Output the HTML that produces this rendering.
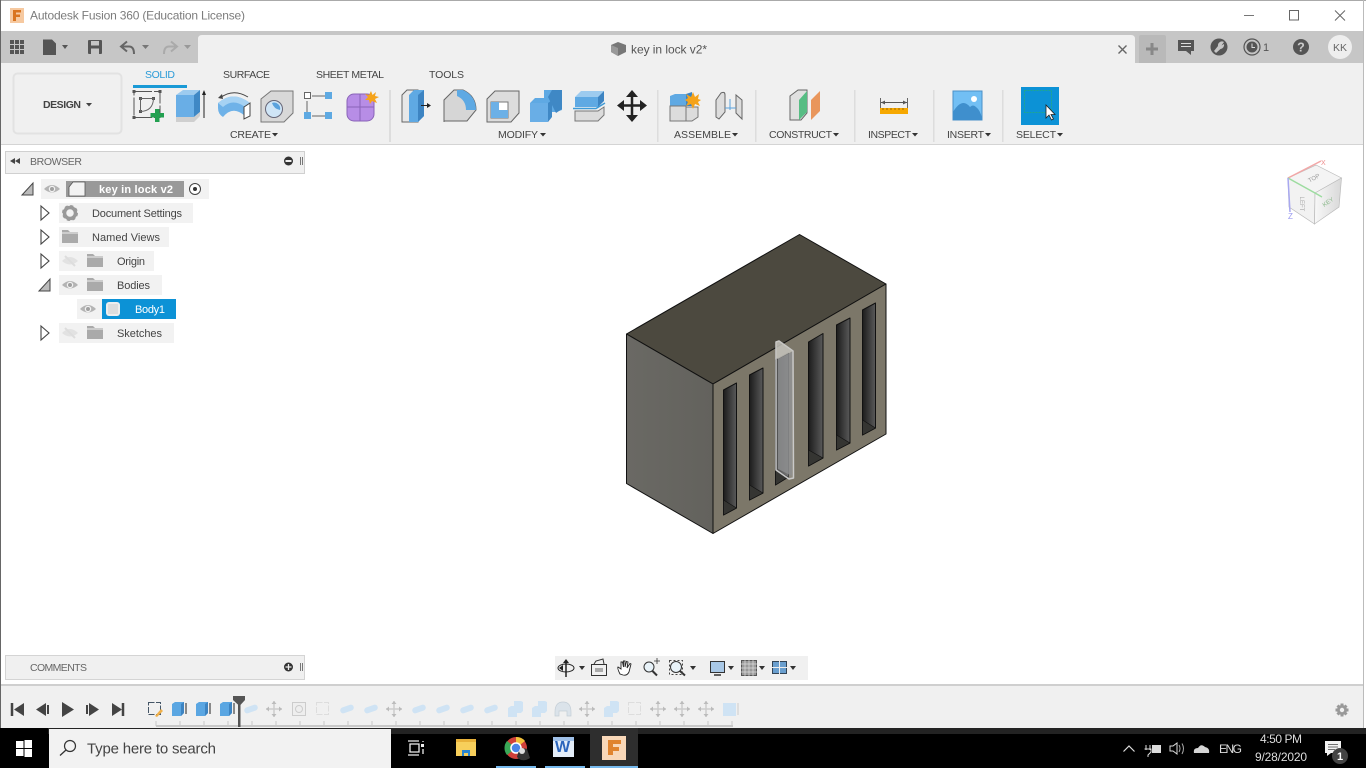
<!DOCTYPE html>
<html><head><meta charset="utf-8"><title>Autodesk Fusion 360</title>
<style>
html,body{margin:0;padding:0;width:1366px;height:768px;overflow:hidden;background:#fff}
svg{display:block;position:absolute;left:0;top:0}
text{font-family:"Liberation Sans",sans-serif;fill:#555;font-size:11px}
.l{font-size:10.5px;fill:#444}
.t{font-size:10.5px;fill:#666}
.tab{font-size:10.5px;fill:#444}
.n{font-size:11px;fill:#444}
</style></head><body>
<svg width="1366" height="768" viewBox="0 0 1366 768">
<defs>
<symbol id="eye" overflow="visible"><path d="M-8 0Q0-8 8 0Q0 7-8 0Z" fill="#b4b4b4"/><circle r="3.200" fill="#f2f2f2"/><circle r="2" fill="#a0a0a0"/></symbol>
<symbol id="eyeoff" overflow="visible"><path d="M-8 0Q0-8 8 0Q0 7-8 0Z" fill="#e2e2e2"/><path d="M-5-5L5 5" stroke="#ddd" stroke-width="2"/></symbol>
<symbol id="folder" overflow="visible"><path d="M-8-7H-2L0-5H8V6H-8Z" fill="#aaa"/><path d="M-8-5H8V-3H-8Z" fill="#ccc"/></symbol>
<symbol id="open" overflow="visible"><path d="M-4-7L4 0L-4 7Z" fill="#fff" stroke="#444" stroke-width="1.100"/></symbol>
<symbol id="down" overflow="visible"><path d="M5-6V6H-6Z" fill="#bbb" stroke="#444" stroke-width="1"/></symbol>
<symbol id="pill" overflow="visible"><rect x="-7" y="-3" width="14" height="6" rx="3" fill="#cfe3f4" transform="rotate(-20)"/></symbol>
<symbol id="mv" overflow="visible"><path d="M0-8V8M-8 0H8" stroke="#ccc" stroke-width="1.500"/><path d="M0-8L-2.500-5H2.500ZM0 8L-2.500 5H2.500ZM-8 0L-5-2.500V2.500ZM8 0L5-2.500V2.500Z" fill="#bbb"/></symbol>
<symbol id="cmb" overflow="visible"><path d="M-7 8V-1L-4-3H-1V-8H6L8-7V2L6 4H2V8Z" fill="#cfe3f4"/></symbol>
<linearGradient id="sl" x1="0" x2="1" y1="0" y2="0"><stop offset="0" stop-color="#1c1c1c"/><stop offset="1" stop-color="#5a5a5a"/></linearGradient>
<linearGradient id="ll" x1="0" x2="1" y1="0" y2="0"><stop offset="0" stop-color="#6a6964"/><stop offset="1" stop-color="#63625d"/></linearGradient>
<linearGradient id="cb" x1="0" x2="1"><stop offset="0" stop-color="#f8f8f8"/><stop offset="1" stop-color="#d8d8d8"/></linearGradient>
</defs>

<!-- Title bar -->
<rect width="1366" height="31" fill="#fff"/>
<rect width="1366" height="1" fill="#aaa"/>
<rect x="0" width="1" height="728" fill="#666"/>
<rect x="10" y="8" width="14" height="15" fill="#f6c9a0"/>
<path d="M13 10H21V12.500H16V14.500H20V17H16V21H13Z" fill="#d9741f"/>
<text x="30" y="19.500" style="font-size:12px;fill:#7c7c7c" textLength="215">Autodesk Fusion 360 (Education License)</text>
<path d="M1244 15.500H1254" stroke="#777"/>
<rect x="1289.500" y="10.500" width="9" height="9.500" fill="none" stroke="#666"/>
<path d="M1335 10.500L1345 20.500M1345 10.500L1335 20.500" stroke="#666"/>

<!-- QAT / tab band -->
<rect x="1" y="31" width="1362" height="32" fill="#c6c6c6"/>
<path d="M198 63V39Q198 35 202 35H1131Q1135 35 1135 39V63Z" fill="#f0f0f0"/>
<g fill="#555">
<rect x="10" y="40" width="4" height="4"/><rect x="15" y="40" width="4" height="4"/><rect x="20" y="40" width="4" height="4"/>
<rect x="10" y="45" width="4" height="4"/><rect x="15" y="45" width="4" height="4"/><rect x="20" y="45" width="4" height="4"/>
<rect x="10" y="50" width="4" height="4"/><rect x="15" y="50" width="4" height="4"/><rect x="20" y="50" width="4" height="4"/>
<path d="M43 39.500H52L56 43.500V55H43Z"/>
<path d="M62 45H68L65 49Z"/>
<path d="M88 41Q88 40 89 40H101Q102 40 102 41V53Q102 54 101 54H89Q88 54 88 53ZM91 41V45.500H99V41ZM91 48.500V54H99V48.500Z" fill-rule="evenodd"/>
<path d="M142 45H149L145.500 49Z" fill="#777"/>
</g>
<path d="M122 46.500H129Q134 46.500 134 54" fill="none" stroke="#666" stroke-width="2"/>
<path d="M127 41.500L121 46.500L127 51.500" fill="none" stroke="#666" stroke-width="2"/>
<path d="M176 46.500H169Q164 46.500 164 54" fill="none" stroke="#aaa" stroke-width="2"/>
<path d="M171 41.500L177 46.500L171 51.500" fill="none" stroke="#aaa" stroke-width="2"/>
<path d="M184 45H191L187.500 49Z" fill="#999"/>
<!-- doc tab title -->
<path d="M611 45L618 42L626 45V52L618 56L611 52Z" fill="#777"/><path d="M611 45L618 48V56L611 52Z" fill="#999"/>
<text x="631" y="53.500" style="font-size:12px;fill:#555" textLength="76">key in lock v2*</text>
<path d="M1118.500 45.500L1126.500 53.500M1126.500 45.500L1118.500 53.500" stroke="#666" stroke-width="1.400"/>
<!-- right controls -->
<path d="M1139 63V37Q1139 35 1141 35H1164Q1166 35 1166 37V63Z" fill="#b9b9b9"/>
<path d="M1152 43V55M1146 49H1158" stroke="#888" stroke-width="3"/>
<path d="M1178 40H1194V51H1191V55L1186 51H1178Z" fill="#555"/><path d="M1181 43.500H1191M1181 46.500H1191" stroke="#ddd"/>
<circle cx="1219" cy="47" r="8.500" fill="#555"/><path d="M1224 42A4 4 0 0 0 1218 46L1214 51L1216 53L1220.500 49A4 4 0 0 0 1224 44L1221.500 45.500Z" fill="#c6c6c6"/>
<circle cx="1252" cy="47" r="8" fill="none" stroke="#555" stroke-width="1.200"/><circle cx="1252" cy="47" r="5.500" fill="#555"/><path d="M1252 43.500V47.500H1255" fill="none" stroke="#ddd"/>
<text x="1263" y="51" style="font-size:11px;fill:#555">1</text>
<circle cx="1301" cy="47" r="8" fill="#555"/><text x="1301" y="51.500" text-anchor="middle" style="font-size:12.500px;font-weight:bold;fill:#ccc">?</text>
<circle cx="1340" cy="47" r="12" fill="#eee"/><text x="1340" y="51" text-anchor="middle" style="font-size:10.500px;fill:#666">KK</text>

<!-- Ribbon -->
<rect x="1" y="63" width="1362" height="81" fill="#f0f0f0"/>
<rect x="1" y="144" width="1362" height="1" fill="#d4d4d4"/>
<rect x="1363" y="0" width="1" height="728" fill="#bbb"/>
<rect x="13.500" y="73.500" width="108" height="60" rx="4" fill="#f0f0f0" stroke="#e2e2e2" stroke-width="2"/>
<text x="43" y="108" style="font-size:10.500px;font-weight:bold;fill:#444" textLength="38">DESIGN</text>
<path d="M86 103H92L89 106.500Z" fill="#444"/>
<text class="tab" x="145" y="78" style="fill:#2a9bd8" textLength="30">SOLID</text>
<rect x="133" y="85" width="54" height="3" fill="#1a9ad6"/>
<text class="tab" x="223" y="78" textLength="47">SURFACE</text>
<text class="tab" x="316" y="78" textLength="68">SHEET METAL</text>
<text class="tab" x="429" y="78" textLength="35">TOOLS</text>

<g fill="#ddd"><rect x="389" y="90" width="2" height="52"/><rect x="657" y="90" width="1.500" height="52"/><rect x="755" y="90" width="1.500" height="52"/><rect x="854" y="90" width="1.500" height="52"/><rect x="933" y="90" width="1.500" height="52"/><rect x="1002" y="90" width="1.500" height="52"/></g>

<g>
<text class="l" x="230" y="138" textLength="41">CREATE</text><path d="M272 133H278L275 136.500Z" fill="#333"/>
<text class="l" x="498" y="138" textLength="40">MODIFY</text><path d="M540 133H546L543 136.500Z" fill="#333"/>
<text class="l" x="674" y="138" textLength="57">ASSEMBLE</text><path d="M732 133H738L735 136.500Z" fill="#333"/>
<text class="l" x="769" y="138" textLength="63">CONSTRUCT</text><path d="M833 133H839L836 136.500Z" fill="#333"/>
<text class="l" x="868" y="138" textLength="43">INSPECT</text><path d="M912 133H918L915 136.500Z" fill="#333"/>
<text class="l" x="947" y="138" textLength="37">INSERT</text><path d="M985 133H991L988 136.500Z" fill="#333"/>
<text class="l" x="1016" y="138" textLength="40">SELECT</text><path d="M1057 133H1063L1060 136.500Z" fill="#333"/>
</g>

<!-- Create icons -->
<rect x="134" y="91.500" width="26" height="26" fill="none" stroke="#555" stroke-dasharray="18 2"/>
<g fill="#555"><rect x="132.500" y="90" width="3" height="3"/><rect x="158.500" y="90" width="3" height="3"/><rect x="132.500" y="116" width="3" height="3"/><rect x="139" y="97" width="3" height="3"/><rect x="152" y="97" width="3" height="3"/><rect x="139" y="110" width="3" height="3"/></g>
<path d="M140.500 98.500H153.500Q153 111 140.500 111.500Z" fill="none" stroke="#666"/>
<path d="M155 109H159.500V113H164V117.500H159.500V122H155V117.500H150.500V113H155Z" fill="#22a050"/>
<path d="M176 95L183 90H200L194 95Z" fill="#9dcbef"/><rect x="176" y="95" width="18" height="22" fill="#69aee6"/><path d="M194 95L200 90V112L194 117Z" fill="#3f88c5"/><path d="M176 117H194L200 112V116L194 122H176Z" fill="#cfcfcf"/>
<path d="M204 118V93" stroke="#222"/><path d="M204 90L202 95H206Z" fill="#222"/>
<path d="M218 103Q233 90 250 103V116H245Q233 105 223 117Q218 114 218 108Z" fill="#6fb2e8"/><path d="M218 103Q233 90 250 103L245 107Q233 98 223 107Z" fill="#a6d2f3"/>
<path d="M244 107L250 103V116L244 119Z" fill="#fff" stroke="#444"/><path d="M220 98Q233 88 248 97" fill="none" stroke="#444"/><path d="M218 98L222 94L223 99Z" fill="#444"/>
<path d="M261 99L271 91H293V113L284 122H261Z" fill="#d8d8d8" stroke="#777"/><circle cx="274" cy="109" r="8.500" fill="#cfe5f6" stroke="#667"/><path d="M272 103A6 6 0 0 1 280 110Q274 109 272 103Z" fill="#5aa2dd"/>
<path d="M312 96H325M307 101V112M312 116H325" stroke="#666"/>
<rect x="304.500" y="92.500" width="6" height="6" fill="#fff" stroke="#666"/><rect x="325" y="92" width="7" height="7" fill="#5ea9e2"/><rect x="304" y="112" width="7" height="7" fill="#5ea9e2"/><rect x="325" y="112" width="7" height="7" fill="#5ea9e2"/>
<rect x="347" y="94" width="27" height="27" rx="7" fill="#b78de6" stroke="#8a64b8"/><path d="M360 94V121M347 107H374" stroke="#8a64b8"/>
<path d="M371 91L372.500 95L376 92L375 96L379 97L375 99L377 103L372 101L370 104L369 100L365 100L368 97L365 94L369 95Z" fill="#f5a31a"/>

<!-- Modify icons -->
<path d="M402 95L407 90H418V122H402Z" fill="#e8e8e8" stroke="#666"/><path d="M409 95L414 90H424V116L418 122H409Z" fill="#5fa9e3"/><path d="M418 95L424 90V116L418 122Z" fill="#3d84c2"/>
<path d="M421 105.500H429" stroke="#222"/><path d="M431 105.500L427 103V108Z" fill="#222"/>
<path d="M444 122V100L454 90H463Q476 96 476 110L467 121H444Z" fill="#d6d6d6" stroke="#666"/>
<path d="M457 90H463Q476 96 476 110H466Q466 100 457 96Z" fill="#5ea9e3"/>
<path d="M487 99L495 91H519V113L511 122H487Z" fill="#dcdcdc" stroke="#666"/><rect x="491" y="102" width="17" height="16" fill="#fff" stroke="#777"/><path d="M491 102H499V110H491Z M491 110H508V118H491Z" fill="#6cb0e6"/>
<path d="M530 122V103L535 98H544V90H562V110L556 112H550V117L544 122Z" fill="#5fa9e3"/>
<path d="M548 97L552 90H562V109L556 113Z" fill="#3f88c5"/><path d="M530 103H548V122H530Z" fill="#69aee6"/><path d="M548 103L552 100V117L548 122Z" fill="#3f88c5"/>
<path d="M575 97L581 91H604L598 97Z" fill="#9dcbef"/><path d="M575 97H598V107H575Z" fill="#5fa9e3"/><path d="M598 97L604 91V101L598 107Z" fill="#3d84c2"/>
<path d="M575 111H598L604 107V115L598 121H575Z" fill="#dcdcdc" stroke="#777"/>
<path d="M573 108.500H596L605 103" fill="none" stroke="#3d9ad6" stroke-width="1.500"/>
<path d="M632 93V117M619 105.500H645" stroke="#222" stroke-width="2.500"/>
<path d="M632 90L626 97H638ZM632 122L626 115H638ZM617 105.500L624 100V111ZM647 105.500L640 100V111Z" fill="#222"/>

<!-- Assemble -->
<path d="M670 96L675 94H686V106H670Z" fill="#5fa9e3"/><path d="M686 94L692 92V106H686Z" fill="#3d84c2"/>
<path d="M670 106H686V121H670Z M686 107H698V117L692 121H686Z" fill="#dcdcdc" stroke="#777"/>
<path d="M693 92L695 97L699 94L698 99L701 100L698 102L700 106L695 104L693 109L691 104L686 106L688 102L685 100L688 98L686 94L691 97Z" fill="#f5a31a"/>
<path d="M716 100L721 93Q725 91 725 95V112L719 119L716 117Z" fill="#ddd" stroke="#666"/><path d="M742 100L736 95V113L742 119Z" fill="#ddd" stroke="#666"/><path d="M730 99V110M725 108H736" stroke="#5aa2dd"/>

<!-- Construct -->
<path d="M790 96L798 90H807V113L801 120H790Z" fill="#e0e0e0" stroke="#666"/><path d="M799 100L807 91V112L799 120Z" fill="#57bd84"/><path d="M811 100L820 91V111L811 120Z" fill="#e9965c"/>

<!-- Inspect -->
<path d="M880.500 98V108M907.500 98V108" stroke="#666"/><path d="M881 102.500H907" stroke="#555"/><path d="M881 102.500L885 100.500V104.500ZM907 102.500L903 100.500V104.500Z" fill="#555"/>
<rect x="880" y="108" width="28" height="6" fill="#f6a800"/>
<path d="M883 108v2M887 108v2M891 108v2M895 108v2M899 108v2M903 108v2" stroke="#a06a00"/>

<!-- Insert -->
<rect x="953" y="91" width="29" height="29" fill="#72bff4" stroke="#4a90c8"/>
<path d="M953 120V112Q962 97 970 107Q973 104 976 107Q980 110 982 118V120Z" fill="#3f8fcd"/><circle cx="974" cy="99" r="3" fill="#fff"/>

<!-- Select -->
<rect x="1021" y="87" width="38" height="38" fill="#0c92d6"/>
<rect x="1024.500" y="90.500" width="27" height="22" fill="none" stroke="#1fa690" stroke-dasharray="2 1"/>
<path d="M1046 105V118L1049 115L1051.500 120L1053.500 119L1051 114.500H1055Z" fill="#fff" stroke="#222" stroke-width=".8"/>

<!-- Browser -->
<rect x="5.500" y="151.500" width="299" height="22" fill="#f0f0f0" stroke="#d0d0d0"/>
<path d="M10 161L15 158V164ZM15 161L20 158V164Z" fill="#444"/>
<text class="t" x="30" y="165" textLength="52">BROWSER</text>
<circle cx="288.500" cy="161" r="4.500" fill="#333"/><rect x="285.500" y="160" width="6" height="2" fill="#eee"/>
<path d="M300.500 157V165M302.500 157V165" stroke="#777"/>

<!-- Tree -->
<use href="#down" x="28" y="189"/>
<rect x="41" y="179" width="168" height="20" fill="#f2f2f2"/>
<use href="#eye" x="52" y="189"/>
<rect x="66" y="181" width="118" height="16" fill="#999"/>
<path d="M69 187L73 182H85V196H69Z" fill="#f2f2f2" stroke="#555" stroke-width=".8"/>
<text x="99" y="193" style="font-weight:bold;fill:#fff" textLength="74">key in lock v2</text>
<circle cx="195" cy="189" r="5.500" fill="#fff" stroke="#444"/><circle cx="195" cy="189" r="2" fill="#333"/>

<use href="#open" x="45" y="213"/><rect x="59" y="203" width="134" height="20" fill="#f2f2f2"/>
<circle cx="70" cy="213" r="5.500" fill="none" stroke="#999" stroke-width="3.500"/><circle cx="70" cy="213" r="7" fill="none" stroke="#999" stroke-width="2" stroke-dasharray="3 2.500"/>
<text class="n" x="92" y="217" textLength="90">Document Settings</text>

<use href="#open" x="45" y="237"/><rect x="59" y="227" width="110" height="20" fill="#f2f2f2"/>
<use href="#folder" x="70" y="237"/>
<text class="n" x="92" y="241" textLength="68">Named Views</text>

<use href="#open" x="45" y="261"/><rect x="59" y="251" width="95" height="20" fill="#f2f2f2"/>
<use href="#eyeoff" x="70" y="261"/><use href="#folder" x="95" y="261"/>
<text class="n" x="117" y="265" textLength="28">Origin</text>

<use href="#down" x="45" y="285"/><rect x="59" y="275" width="103" height="20" fill="#f2f2f2"/>
<use href="#eye" x="70" y="285"/><use href="#folder" x="95" y="285"/>
<text class="n" x="117" y="289" textLength="33">Bodies</text>

<rect x="77" y="299" width="99" height="20" fill="#f2f2f2"/>
<use href="#eye" x="88" y="309"/>
<rect x="102" y="299" width="74" height="20" fill="#0c92d6"/>
<rect x="106" y="302" width="14" height="14" rx="3" fill="#eee"/><rect x="108" y="304" width="10" height="10" fill="#ddd"/>
<text class="n" x="135" y="313" style="fill:#fff" textLength="30">Body1</text>

<use href="#open" x="45" y="333"/><rect x="59" y="323" width="115" height="20" fill="#f2f2f2"/>
<use href="#eyeoff" x="70" y="333"/><use href="#folder" x="95" y="333"/>
<text class="n" x="117" y="337" textLength="45">Sketches</text>

<!-- Model -->
<g stroke-linejoin="round">
<polygon points="626.500,334 799.500,234.500 886,284 713,384" fill="#4c493f" stroke="#111" stroke-width="1"/>
<polygon points="626.500,334 713,384 713,533.500 626.500,483.500" fill="url(#ll)" stroke="#111" stroke-width="1"/>
<polygon points="713,384 886,284 886,434 713,533.500" fill="#7c7769" stroke="#111" stroke-width="1"/>
<g stroke="#111" stroke-width="1">
<polygon points="723.500,390 736.500,383 736.500,508 723.500,515" fill="url(#sl)"/>
<polygon points="749.500,375 763,368 763,493 749.500,500" fill="url(#sl)"/>
<polygon points="775.500,360 788.500,353 788.500,477 775.500,485" fill="url(#sl)"/>
<polygon points="808.500,342 823,333.500 823,458 808.500,466" fill="url(#sl)"/>
<polygon points="836.500,325 850,318 850,443 836.500,450" fill="url(#sl)"/>
<polygon points="862.500,310 875.500,303 875.500,428 862.500,435" fill="url(#sl)"/>
</g>
<g fill="#353532" stroke="#111" stroke-width=".7">
<polygon points="723.500,500 736.500,508 723.500,515"/>
<polygon points="749.500,485 763,493 749.500,500"/>
<polygon points="775.500,470 788.500,477 775.500,485"/>
<polygon points="808.500,450 823,458 808.500,466"/>
<polygon points="836.500,435 850,443 836.500,450"/>
<polygon points="862.500,420 875.500,428 862.500,435"/>
</g>
<polygon points="776,342 779,341 793,351 793.500,478 789,479 776,470" fill="#bdbdbd" fill-opacity=".3" stroke="#c9c9c9" stroke-width="1.500"/>
<polygon points="776,342 779,341 793,351 778,359 776,358" fill="#c6c4bd" fill-opacity=".8"/>
<polygon points="778,359 792,352 792,476 778,469" fill="#8f9091" fill-opacity=".8"/>
</g>

<!-- ViewCube -->
<polygon points="1288,178 1316,165 1341.500,178 1315,193" fill="#f4f4f4" stroke="#bbb" stroke-width=".7"/>
<polygon points="1288,178 1315,193 1314.500,224 1289,207" fill="#f2f2f2" stroke="#bbb" stroke-width=".7"/>
<polygon points="1315,193 1341.500,178 1339,207 1314.500,224" fill="url(#cb)" stroke="#bbb" stroke-width=".7"/>
<path d="M1288 178L1321 161" stroke="#f3a7a7" stroke-width="1.500"/><path d="M1288 178L1315 193L1322 197" stroke="#9ddca0" stroke-width="1.500"/><path d="M1288 178L1290 212" stroke="#a8a8f0" stroke-width="1.500"/>
<text x="1321" y="165" style="font-size:7px;fill:#ee8f8f">X</text>
<text x="1288" y="219" style="font-size:8px;fill:#9a9af0">Z</text>
<text x="1314" y="180" text-anchor="middle" transform="rotate(-28 1314 178)" style="font-size:6px;fill:#999">TOP</text>
<text x="1302" y="204" text-anchor="middle" transform="rotate(90 1301 203)" style="font-size:6px;fill:#aaa">LEFT</text>
<text x="1328" y="204" text-anchor="middle" transform="rotate(-35 1328 202)" style="font-size:6px;fill:#8bb98b">KEY</text>

<!-- Comments -->
<rect x="5.500" y="655.500" width="299" height="24" fill="#f0f0f0" stroke="#d4d4d4"/>
<text class="t" x="30" y="671" textLength="57">COMMENTS</text>
<circle cx="288.500" cy="667" r="4.500" fill="#333"/><path d="M285.500 667H291.500M288.500 664V670" stroke="#eee" stroke-width="1.300"/>
<path d="M300.500 663V671M302.500 663V671" stroke="#777"/>

<!-- Nav bar -->
<rect x="555" y="656" width="253" height="24" fill="#f0f0f0"/>
<ellipse cx="566" cy="668" rx="8" ry="4" fill="none" stroke="#222"/><path d="M566 660V677" stroke="#222" stroke-width="1.500"/><path d="M566 659L563 663H569ZM559 668L563 665V671Z" fill="#222"/>
<path d="M579 666H585L582 670Z" fill="#333"/>
<rect x="591.500" y="664.500" width="15" height="11" fill="none" stroke="#333"/><rect x="595" y="668" width="8" height="4" fill="#aaa"/><path d="M594 664L596 661L603 659L604 664" fill="none" stroke="#333"/>
<path d="M620 674Q617 668 618 667L621 669V662L622.500 662L623.500 667V661H625V667L626.500 661.500L628 662L627 668L630 663.500L631 664L629 672Q627 676 623 675Z" fill="#fff" stroke="#222" stroke-width=".9"/>
<circle cx="649" cy="667" r="5" fill="#e8f2f8" stroke="#333"/><path d="M652.500 671L657 675.500" stroke="#333" stroke-width="2"/><path d="M654 661H660M657 658V664" stroke="#333" stroke-width=".8"/>
<circle cx="676" cy="667" r="5.500" fill="#e8f2f8" stroke="#333"/><path d="M680 671L685 675.500" stroke="#333" stroke-width="2"/><rect x="669.500" y="660.500" width="13" height="14" fill="none" stroke="#444" stroke-dasharray="2 2"/>
<path d="M690 666H696L693 670Z" fill="#333"/>
<rect x="710.500" y="661.500" width="14" height="11" fill="#a9c8e6" stroke="#333"/><path d="M714 675H721" stroke="#333" stroke-width="1.500"/>
<path d="M728 666H734L731 670Z" fill="#333"/>
<rect x="741.500" y="660.500" width="15" height="15" fill="#999" stroke="#555"/><path d="M745 660v16M749 660v16M753 660v16M741 664h16M741 668h16M741 672h16" stroke="#ddd" stroke-width=".7"/>
<path d="M759 666H765L762 670Z" fill="#333"/>
<rect x="772.500" y="661.500" width="14" height="12" fill="#6a9fcf" stroke="#345"/><path d="M779.500 661V674M772 667.500H787" stroke="#eee"/>
<path d="M790 666H796L793 670Z" fill="#333"/>

<!-- Timeline -->
<rect x="1" y="684" width="1362" height="2" fill="#cfcfcf"/>
<rect x="1" y="686" width="1362" height="42" fill="#f0f0f0"/>
<path d="M12 703V716" stroke="#444" stroke-width="2.500"/><path d="M24 703V716L14 709.500Z" fill="#444"/>
<path d="M46 703V716L36 709.500Z" fill="#444"/><rect x="47" y="705" width="2" height="9" fill="#444"/>
<path d="M62 702V717L74 709.500Z" fill="#444"/>
<rect x="86" y="705" width="2" height="9" fill="#444"/><path d="M89 703V716L99 709.500Z" fill="#444"/>
<path d="M112 703V716L122 709.500Z" fill="#444"/><path d="M123 703V716" stroke="#444" stroke-width="2.500"/>

<path d="M156 726H733" stroke="#c8c8c8" stroke-width="2"/>
<path d="M156 721v5M180 721v5M204 721v5M228 721v5M252 721v5M276 721v5M300 721v5M324 721v5M348 721v5M372 721v5M396 721v5M420 721v5M444 721v5M468 721v5M492 721v5M516 721v5M540 721v5M564 721v5M588 721v5M612 721v5M636 721v5M660 721v5M684 721v5M708 721v5M732 721v5" stroke="#c8c8c8"/>

<rect x="148.500" y="702.500" width="12" height="12" fill="none" stroke="#456" stroke-dasharray="6 1.500"/><path d="M155 716L161 709L163 711L157 717Z" fill="#f0b04a"/>
<g>
<path d="M172 704L175 702H184V713L181 716H172Z" fill="#5aa6e2"/><path d="M181 704L184 702V713L181 716Z" fill="#3d84c2"/><path d="M186 703V714" stroke="#222"/>
<path d="M196 704L199 702H208V713L205 716H196Z" fill="#5aa6e2"/><path d="M205 704L208 702V713L205 716Z" fill="#3d84c2"/><path d="M210 703V714" stroke="#222"/>
<path d="M220 704L223 702H232V713L229 716H220Z" fill="#5aa6e2"/><path d="M229 704L232 702V713L229 716Z" fill="#3d84c2"/><path d="M234 703V714" stroke="#222"/>
</g>
<path d="M233 696H245V700L239.500 706L233 700Z" fill="#555"/><rect x="238" y="700" width="2.500" height="27" fill="#555"/>

<use href="#pill" x="251" y="709"/><use href="#mv" x="274" y="709"/>
<rect x="292.500" y="702.500" width="13" height="13" fill="#eee" stroke="#ccc"/><circle cx="299" cy="709" r="3.500" fill="none" stroke="#ccc"/>
<rect x="316.500" y="702.500" width="12" height="12" fill="none" stroke="#ddd" stroke-dasharray="6 1.500"/>
<use href="#pill" x="347" y="709"/><use href="#pill" x="371" y="709"/><use href="#mv" x="394" y="709"/>
<use href="#pill" x="419" y="709"/><use href="#pill" x="443" y="709"/><use href="#pill" x="467" y="709"/><use href="#pill" x="491" y="709"/>
<use href="#cmb" x="515" y="709"/><use href="#cmb" x="539" y="709"/>
<path d="M555 712Q555 702 563 702Q571 702 571 712V716H567V711H559V716H555Z" fill="#dbe3ea" stroke="#c4ced6" stroke-width=".7"/>
<use href="#mv" x="587" y="709"/><use href="#cmb" x="611" y="709"/>
<rect x="628.500" y="702.500" width="12" height="12" fill="none" stroke="#ddd" stroke-dasharray="6 1.500"/>
<use href="#mv" x="658" y="709"/><use href="#mv" x="682" y="709"/><use href="#mv" x="706" y="709"/>
<rect x="723" y="703" width="13" height="13" fill="#cfe3f4"/><path d="M738 703V715" stroke="#ccc"/>

<path d="M1342 703.500V716.500M1335.500 710H1348.500M1337.500 705.500L1346.500 714.500M1346.500 705.500L1337.500 714.500" stroke="#999" stroke-width="3"/><circle cx="1342" cy="710" r="5" fill="#999"/><circle cx="1342" cy="710" r="2.200" fill="#f0f0f0"/>

<!-- Taskbar -->
<rect y="728" width="1366" height="40" fill="#000"/>
<rect x="48" y="728" width="1318" height="6" fill="#232323"/>
<rect x="49" y="729" width="342" height="39" fill="#f2f2f2"/>
<g fill="#fff"><rect x="16" y="741" width="7.500" height="7"/><rect x="24.500" y="740" width="7.500" height="8"/><rect x="16" y="749" width="7.500" height="7"/><rect x="24.500" y="749" width="7.500" height="8"/></g>
<circle cx="70" cy="746" r="5.500" fill="none" stroke="#333" stroke-width="1.200"/><path d="M66 750L60 755.500" stroke="#333" stroke-width="1.300"/>
<text x="87" y="753.500" style="font-size:15px;fill:#444" textLength="129">Type here to search</text>
<path d="M408 741H419M408 755H419M410 744H419V752H410Z" fill="none" stroke="#eee" stroke-width="1.300"/><rect x="421" y="744" width="3" height="3" fill="#eee"/><path d="M423 741v1M423 749v5" stroke="#eee" stroke-width="1.300"/>
<path d="M456 739H476V756H456Z" fill="#f7cf5b"/><path d="M456 739H476V742H456Z" fill="#e9b23a"/><path d="M462 756V750H470V756H468V753H464V756Z" fill="#2a86d0"/>
<circle cx="516" cy="748" r="11" fill="#d0413a"/><path d="M516 748L525 741A11 11 0 0 0 516 737Z" fill="#f3c13a"/><path d="M516 748L507 755A11 11 0 0 1 507 741Z" fill="#3aa757"/><circle cx="516" cy="748" r="5" fill="#4a86e8" stroke="#fff" stroke-width="1.500"/>
<path d="M517 757Q519 746 527 749L530 758Q524 762 519 759Z" fill="#333"/><circle cx="522" cy="751" r="3" fill="#ddd"/>
<rect x="553" y="737" width="21" height="20" fill="#e4edf8"/><rect x="553" y="737" width="21" height="4" fill="#9fc0e8"/><text x="562.500" y="752" text-anchor="middle" style="font-size:16px;font-weight:bold;fill:#2b65bc">W</text>
<rect x="590" y="728" width="48" height="38" fill="#2e2e2e"/>
<rect x="602" y="736" width="24" height="24" fill="#f8d7b8"/><path d="M608 740H621V744H613V747H619V751H613V755H608Z" fill="#e0842f"/>
<rect x="496" y="766" width="40" height="2" fill="#76b9ed"/><rect x="545" y="766" width="40" height="2" fill="#76b9ed"/><rect x="590" y="766" width="48" height="2" fill="#76b9ed"/>

<path d="M1123.500 751.500L1129 746L1134.500 751.500" fill="none" stroke="#ddd" stroke-width="1.200"/>
<path d="M1146 745V750M1150 745V750M1144.500 749H1151V752L1148 755V757" fill="none" stroke="#ddd"/><rect x="1152.500" y="745.500" width="8" height="7" fill="#ddd" stroke="#ddd"/>
<path d="M1170 746H1173L1177 743V754L1173 751H1170Z" fill="none" stroke="#ddd"/><path d="M1179 745Q1181 748.500 1179 752M1182 743.500Q1185 748.500 1182 754" fill="none" stroke="#aaa"/>
<path d="M1194 753Q1193 748 1198 748Q1201 743 1205 747Q1210 748 1209 753Z" fill="#d6d6d6"/>
<text x="1219" y="753" style="font-size:12px;fill:#ddd" textLength="23">ENG</text>
<text x="1260" y="743" style="font-size:12px;fill:#ddd" textLength="42">4:50 PM</text>
<text x="1255" y="761" style="font-size:12px;fill:#ddd" textLength="52">9/28/2020</text>
<path d="M1325 741H1341V753H1331L1327 756V753H1325Z" fill="#f2f2f2"/><path d="M1328 744.500H1338M1328 747H1338M1328 749.500H1335" stroke="#444" stroke-width=".8"/>
<circle cx="1340" cy="756" r="8" fill="#444"/><text x="1340" y="760" text-anchor="middle" style="font-size:11px;font-weight:bold;fill:#fff">1</text>
</svg>
</body></html>
